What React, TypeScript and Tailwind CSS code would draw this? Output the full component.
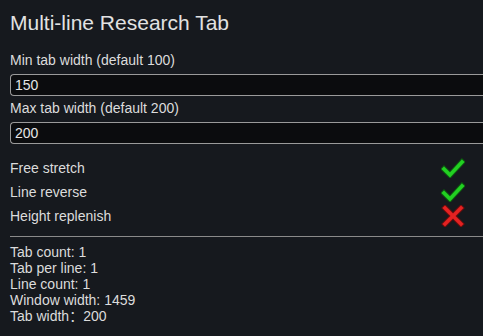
import React from "react";

function Check() {
  return (
    <svg width="24" height="20" viewBox="0 0 24 20">
      <polyline points="3,11 9,17 21,4" fill="none" stroke="#0d5a10" strokeWidth="5.5" strokeLinecap="square" />
      <polyline points="3,11 9,17 21,4" fill="none" stroke="#22d022" strokeWidth="3.6" strokeLinecap="square" />
    </svg>
  );
}

function Cross() {
  return (
    <svg width="24" height="22" viewBox="0 0 24 22">
      <g fill="none" strokeLinecap="square">
        <line x1="4" y1="3" x2="20" y2="19" stroke="#6a0d0d" strokeWidth="5.5" />
        <line x1="20" y1="3" x2="4" y2="19" stroke="#6a0d0d" strokeWidth="5.5" />
        <line x1="4" y1="3" x2="20" y2="19" stroke="#e42222" strokeWidth="3.6" />
        <line x1="20" y1="3" x2="4" y2="19" stroke="#e42222" strokeWidth="3.6" />
      </g>
    </svg>
  );
}

function Row({ label, ok }: { label: string; ok: boolean }) {
  return (
    <div className="flex h-[24px] items-center justify-between pr-[18px]">
      <span className="text-[14px] leading-[16px]">{label}</span>
      {ok ? <Check /> : <Cross />}
    </div>
  );
}

export default function App() {
  return (
    <div className="w-[483px] h-[336px] overflow-hidden bg-[#16191e] text-[#dcdcdc] pl-[10px] font-['Liberation_Sans','Noto_Sans_CJK_SC',sans-serif]">
      <div className="pt-[11px] text-[21px] leading-[24px] text-[#e2e2e2]">Multi-line Research Tab</div>

      <div className="mt-[17px] text-[14px] leading-[16px]">Min tab width (default 100)</div>
      <div className="mt-[6px] h-[22px] w-[480px] rounded-l-[4px] border border-r-0 border-[#9a9a9a] bg-[#0b0c0e] pl-[4px] text-[14px] leading-[20px] text-[#e6e6e6]">
        150
      </div>

      <div className="mt-[4px] text-[14px] leading-[16px]">Max tab width (default 200)</div>
      <div className="mt-[6px] h-[22px] w-[480px] rounded-l-[4px] border border-r-0 border-[#9a9a9a] bg-[#0b0c0e] pl-[4px] text-[14px] leading-[20px] text-[#e6e6e6]">
        200
      </div>

      <div className="mt-[12px] flex flex-col">
        <Row label="Free stretch" ok={true} />
        <Row label="Line reverse" ok={true} />
        <Row label="Height replenish" ok={false} />
      </div>

      <div className="mt-[8px] h-px w-full bg-[#8a8a8a]" />

      <div className="mt-[7px] flex flex-col text-[14px] leading-[16px]">
        <div>Tab count: 1</div>
        <div>Tab per line: 1</div>
        <div>Line count: 1</div>
        <div>Window width: 1459</div>
        <div className="whitespace-pre">Tab width：200</div>
      </div>
    </div>
  );
}
